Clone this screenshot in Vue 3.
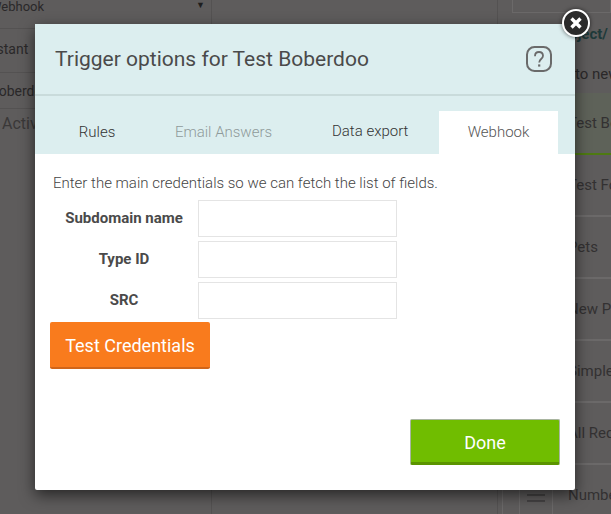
<template>
  <div class="page">
    <!-- page behind the overlay -->
    <div class="back">
      <div class="back-left">
        <div class="select-row">
          <span>Webhook</span>
          <span class="caret">▼</span>
        </div>
        <div class="left-row instant">Instant</div>
        <div class="left-row boberdoo">Boberdoo</div>
        <div class="left-active">Active</div>
      </div>
      <div class="back-mid"></div>
      <div class="back-right">
        <div class="search-box"></div>
        <div class="right-head">Project/</div>
        <div class="right-sub">to new</div>
        <div class="right-list">
          <div
            v-for="item in items"
            :key="item"
            class="right-item"
            :class="{ current: item === 'Test Bo' }"
          >
            <div class="handle">
              <i></i><i></i><i></i>
            </div>
            <span>{{ item }}</span>
          </div>
        </div>
      </div>
    </div>

    <!-- modal -->
    <div class="modal">
      <button class="close" type="button">
        <svg width="14" height="14" viewBox="0 0 14 14">
          <path d="M2.5 2.5l9 9M11.5 2.5l-9 9" stroke="#fff" stroke-width="3.4" fill="none" />
        </svg>
      </button>

      <div class="modal-head">
        <h2>Trigger options for Test Boberdoo</h2>
        <svg class="help" width="28" height="28" viewBox="0 0 28 28">
          <rect x="2" y="2" width="24" height="24" rx="7.5" fill="none" stroke="#6a6a6a" stroke-width="2" />
          <path d="M10 11.2c0-2.5 1.7-4.2 4-4.2s4 1.6 4 3.8c0 3.2-3.8 3.2-3.8 6.6" fill="none" stroke="#6a6a6a" stroke-width="1.8" />
          <rect x="13.1" y="19.4" width="2.2" height="2.2" fill="#6a6a6a" />
        </svg>
      </div>

      <div class="tabs">
        <div
          v-for="tab in tabs"
          :key="tab.label"
          class="tab"
          :class="tab.state"
        >
          {{ tab.label }}
        </div>
      </div>

      <div class="modal-body">
        <p class="intro">Enter the main credentials so we can fetch the list of fields.</p>
        <div class="field" v-for="f in fields" :key="f">
          <label>{{ f }}</label>
          <input type="text" />
        </div>
        <button class="btn-test" type="button">Test Credentials</button>
        <div class="foot">
          <button class="btn-done" type="button">Done</button>
        </div>
      </div>
    </div>
  </div>
</template>

<script setup>
const items = ['Test Bo', 'Test Fo', 'Pets', 'New P', 'Simple', 'All Req', 'Numbe']
const tabs = [
  { label: 'Rules', state: 'rules' },
  { label: 'Email Answers', state: 'off' },
  { label: 'Data export', state: 'export' },
  { label: 'Webhook', state: 'active' }
]
const fields = ['Subdomain name', 'Type ID', 'SRC']
</script>

<style>
html, body {
  margin: 0;
  overflow: hidden;
}
</style>

<style scoped>
.page {
  position: relative;
  width: 611px;
  height: 514px;
  overflow: hidden;
  background: #5e5c5c;
  font-family: Roboto, "Liberation Sans", sans-serif;
}

/* Fundo */
.back {
  display: flex;
  height: 514px;
  color: #2a2829;
  font-size: 14px;
}

.back-left {
  width: 211px;
  flex: none;
  border-right: 1px solid #545252;
}

.select-row {
  display: flex;
  justify-content: space-between;
  height: 28px;
  padding-right: 6px;
  margin-left: -10px;
  line-height: 14px;
  font-size: 13px;
  border-bottom: 1px solid #545252;
}

.caret {
  font-size: 9px;
  color: #1e1e1e;
  margin-top: -2px;
}

.left-row {
  white-space: nowrap;
  font-size: 14px;
  border-bottom: 1px solid #545252;
}

.left-row.instant {
  height: 43px;
  line-height: 41px;
  padding-left: 15px;
  margin-left: -30px;
}

.left-row.boberdoo {
  height: 35px;
  line-height: 37px;
  padding-left: 20px;
  margin-left: -30px;
}

.left-active {
  margin-left: 2px;
  margin-top: 5px;
  font-size: 16px;
  line-height: 20px;
  color: #3a3838;
}

.back-mid {
  flex: 1;
  border-right: 1px solid #545252;
}

.back-right {
  width: 113px;
  flex: none;
  padding-left: 4px;
  box-sizing: border-box;
  white-space: nowrap;
}

.search-box {
  height: 12px;
  margin-left: 10px;
  border: 1px solid #6b6969;
  border-top: 0;
}

.right-head {
  margin-top: 13px;
  margin-left: 52px;
  font-weight: 700;
  font-size: 15px;
  line-height: 16px;
  color: #1e3a3a;
}

.right-sub {
  margin-top: 23px;
  margin-left: 73px;
  font-size: 15px;
  line-height: 18px;
  color: #2a2829;
}

.right-list {
  margin-top: 10px;
  border-left: 1px solid #6b6969;
}

.right-item {
  display: flex;
  align-items: center;
  gap: 15px;
  height: 62px;
  box-sizing: border-box;
  padding-left: 16px;
  border-bottom: 2px solid #6b6969;
  font-size: 15px;
  color: #333132;
}

.right-item.current {
  background: #5e6259;
  border-bottom-color: #4e7a12;
}

.handle {
  display: flex;
  flex: none;
  flex-direction: column;
  justify-content: center;
  gap: 4px;
  width: 34px;
  height: 100%;
  padding: 0 7px;
  box-sizing: border-box;
  border: solid #6b6969;
  border-width: 0 1px;
}

.handle i {
  display: block;
  height: 2px;
  background: #454344;
}

/* Modal */
.modal {
  position: absolute;
  left: 35px;
  top: 24px;
  width: 540px;
  height: 466px;
  background: #fff;
  border-radius: 2px;
  box-shadow: 0 5px 15px rgba(0, 0, 0, 0.6);
}

.close {
  position: absolute;
  right: -15px;
  top: -15px;
  width: 28px;
  height: 28px;
  padding: 0;
  border: 2px solid #fff;
  border-radius: 50%;
  background: #2b2b2b;
  display: flex;
  align-items: center;
  justify-content: center;
  box-sizing: border-box;
  box-shadow: 0 0 4px rgba(0, 0, 0, 0.6);
  z-index: 2;
}

.modal-head {
  display: flex;
  align-items: center;
  justify-content: space-between;
  height: 70px;
  padding: 0 22px 0 20px;
  background: #dceeef;
  border-bottom: 2px solid #c9dbdb;
}

.modal-head h2 {
  margin: 0;
  font-size: 21px;
  font-weight: 400;
  color: #4a4a4a;
}

.tabs {
  display: flex;
  height: 43px;
  padding-top: 15px;
  background: #dceeef;
  font-size: 15px;
  font-weight: 300;
  color: #333;
}

.tab {
  display: flex;
  align-items: center;
  justify-content: center;
  height: 41px;
  padding-bottom: 2px;
}

.tab.rules { width: 124px; }
.tab.off { width: 129px; color: #8f9a9a; }

.tab.export {
  width: 151px;
  box-sizing: border-box;
  justify-content: flex-start;
  padding-left: 44px;
}

.tab.active {
  width: 119px;
  background: #fff;
  color: #555;
}

.modal-body {
  position: relative;
  height: 336px;
  padding: 20px 15px 0;
  box-sizing: border-box;
}

.intro {
  margin: 0 0 8px 3px;
  font-size: 15px;
  font-weight: 300;
  line-height: 18px;
  color: #444;
}

.field {
  display: flex;
  align-items: center;
  height: 37px;
  margin-bottom: 4px;
}

.field label {
  width: 148px;
  padding-bottom: 2px;
  text-align: center;
  font-size: 15px;
  font-weight: 700;
  color: #4a4a4a;
}

.field input {
  width: 199px;
  height: 37px;
  box-sizing: border-box;
  border: 1px solid #e4e4e4;
  outline: none;
}

.btn-test {
  display: block;
  width: 160px;
  height: 47px;
  margin-top: -1px;
  padding-top: 2px;
  border: 0;
  border-bottom: 2px solid #d0651a;
  border-radius: 2px;
  background: #f97b1d;
  color: #fff;
  font: 400 18px Roboto, sans-serif;
}

.foot {
  position: absolute;
  right: 15px;
  bottom: 25px;
}

.btn-done {
  display: block;
  width: 150px;
  height: 46px;
  padding-top: 4px;
  border: 1px solid #a9b5a0;
  border-bottom: 3px solid #5b9400;
  border-radius: 2px;
  background: #70bd00;
  color: #fff;
  font: 400 18px Roboto, sans-serif;
}
</style>
